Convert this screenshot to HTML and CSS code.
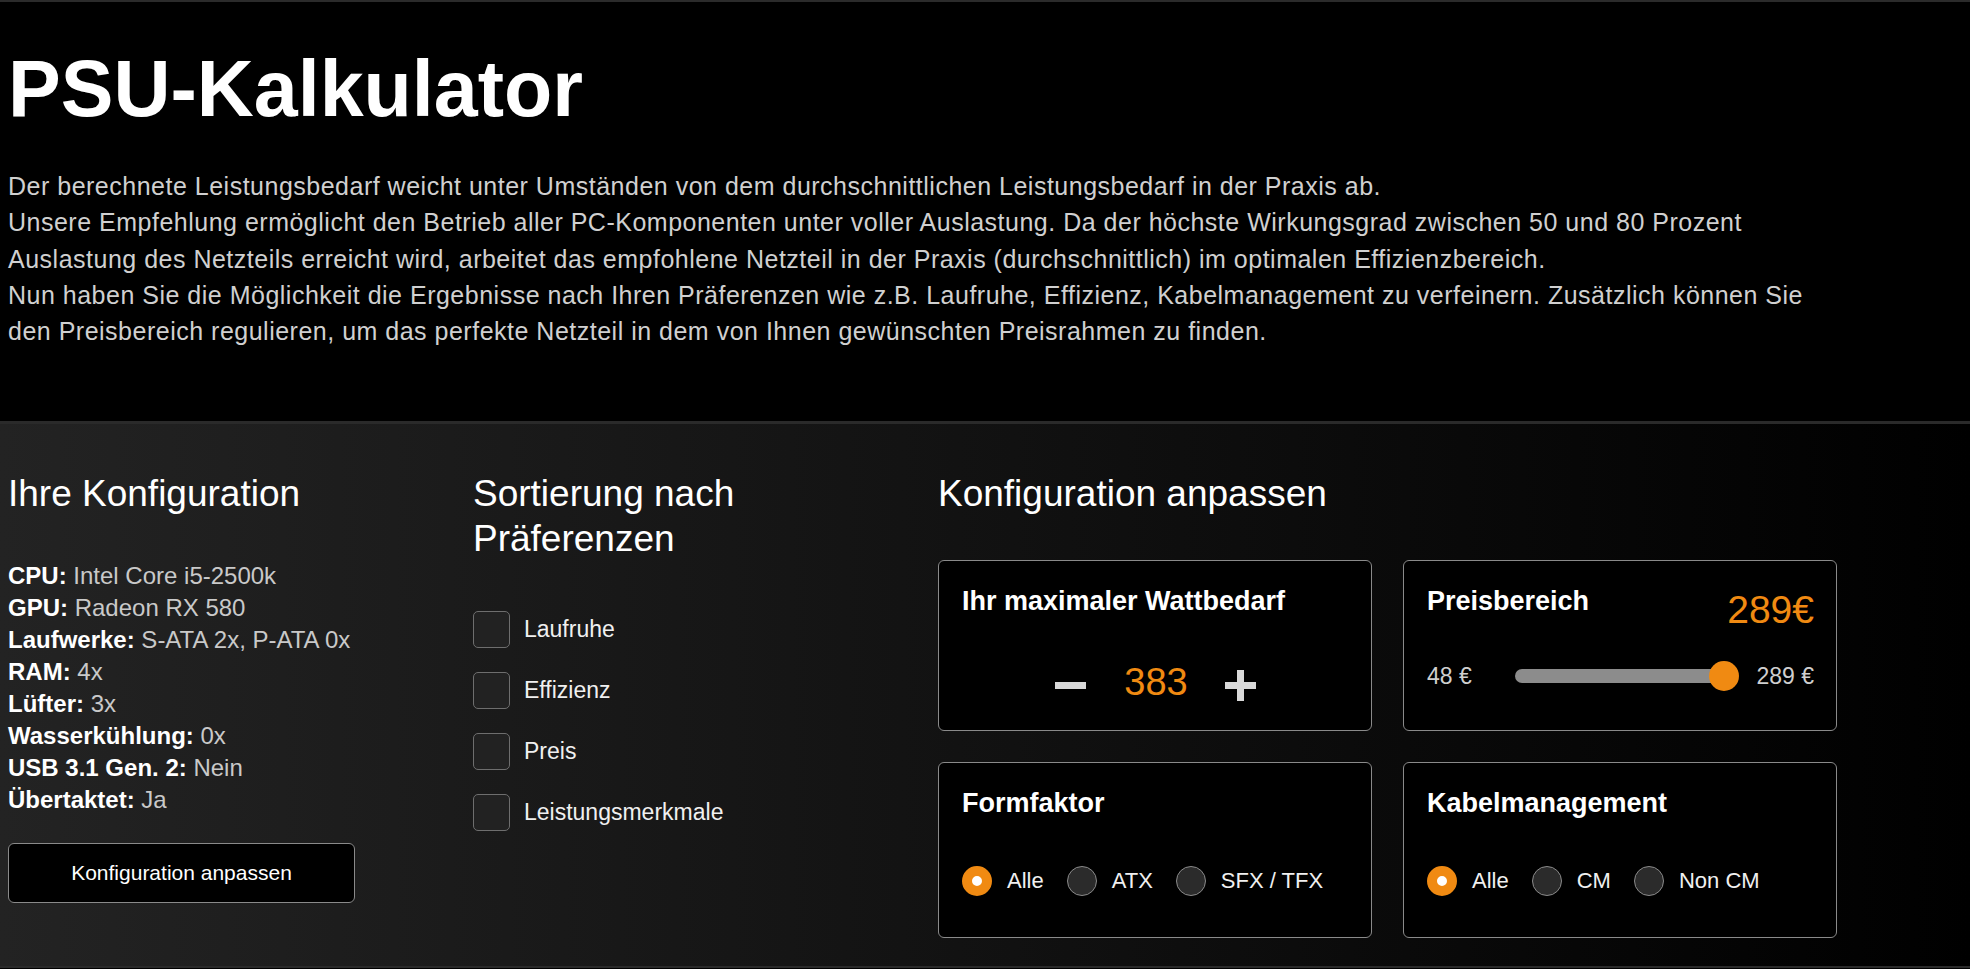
FILE: index.html
```html
<!DOCTYPE html>
<html lang="de">
<head>
<meta charset="utf-8">
<title>PSU-Kalkulator</title>
<link rel="stylesheet" href="styles.css">
</head>
<body>
<div class="topbar"></div>
<header class="intro">
  <h1 class="title">PSU-Kalkulator</h1>
  <p class="lead">Der berechnete Leistungsbedarf weicht unter Umständen von dem durchschnittlichen Leistungsbedarf in der Praxis ab.<br>Unsere Empfehlung ermöglicht den Betrieb aller PC-Komponenten unter voller Auslastung. Da der höchste Wirkungsgrad zwischen 50 und 80 Prozent<br>Auslastung des Netzteils erreicht wird, arbeitet das empfohlene Netzteil in der Praxis (durchschnittlich) im optimalen Effizienzbereich.<br>Nun haben Sie die Möglichkeit die Ergebnisse nach Ihren Präferenzen wie z.B. Laufruhe, Effizienz, Kabelmanagement zu verfeinern. Zusätzlich können Sie<br>den Preisbereich regulieren, um das perfekte Netzteil in dem von Ihnen gewünschten Preisrahmen zu finden.</p>
</header>

<main class="main">
  <section class="col">
    <h2 class="heading heading-spec">Ihre Konfiguration</h2>
    <ul class="spec-list">
      <li><b>CPU:</b> Intel Core i5-2500k</li>
      <li><b>GPU:</b> Radeon RX 580</li>
      <li><b>Laufwerke:</b> S-ATA 2x, P-ATA 0x</li>
      <li><b>RAM:</b> 4x</li>
      <li><b>Lüfter:</b> 3x</li>
      <li><b>Wasserkühlung:</b> 0x</li>
      <li><b>USB 3.1 Gen. 2:</b> Nein</li>
      <li><b>Übertaktet:</b> Ja</li>
    </ul>
    <button class="btn" type="button">Konfiguration anpassen</button>
  </section>

  <section class="col">
    <h2 class="heading">Sortierung nach<br>Präferenzen</h2>
    <ul class="check-list">
      <li class="check-row"><span class="checkbox"></span><span class="check-label">Laufruhe</span></li>
      <li class="check-row"><span class="checkbox"></span><span class="check-label">Effizienz</span></li>
      <li class="check-row"><span class="checkbox"></span><span class="check-label">Preis</span></li>
      <li class="check-row"><span class="checkbox"></span><span class="check-label">Leistungsmerkmale</span></li>
    </ul>
  </section>

  <section class="col col-wide">
    <h2 class="heading heading-cards">Konfiguration anpassen</h2>
    <div class="cards">
      <div class="card card-watt">
        <h3 class="card-title">Ihr maximaler Wattbedarf</h3>
        <div class="stepper">
          <svg class="step-icon minus" width="31" height="7" viewBox="0 0 31 7"><rect x="0" y="0" width="31" height="7" fill="#d9d9d9"/></svg>
          <span class="watt">383</span>
          <svg class="step-icon plus" width="31" height="31" viewBox="0 0 31 31"><rect x="0" y="12" width="31" height="7" fill="#d9d9d9"/><rect x="12" y="0" width="7" height="31" fill="#d9d9d9"/></svg>
        </div>
      </div>

      <div class="card">
        <div class="card-head">
          <h3 class="card-title">Preisbereich</h3>
          <span class="price">289€</span>
        </div>
        <div class="slider-row">
          <span class="slider-label">48 €</span>
          <div class="track"><span class="thumb"></span></div>
          <span class="slider-label">289 €</span>
        </div>
      </div>

      <div class="card card-radio">
        <h3 class="card-title">Formfaktor</h3>
        <div class="radios">
          <span class="radio checked"></span><span class="radio-label">Alle</span>
          <span class="radio"></span><span class="radio-label">ATX</span>
          <span class="radio"></span><span class="radio-label">SFX / TFX</span>
        </div>
      </div>

      <div class="card card-radio">
        <h3 class="card-title">Kabelmanagement</h3>
        <div class="radios">
          <span class="radio checked"></span><span class="radio-label">Alle</span>
          <span class="radio"></span><span class="radio-label">CM</span>
          <span class="radio"></span><span class="radio-label">Non CM</span>
        </div>
      </div>
    </div>
  </section>
</main>
</body>
</html>
```

FILE: styles.css
```css
* {
  box-sizing: border-box;
}

html, body {
  margin: 0;
  padding: 0;
  background: #000;
  color: #fff;
  font-family: "Liberation Sans", Arial, sans-serif;
}

.topbar {
  height: 2px;
  background: #2b2b2b;
}

.intro {
  padding: 0 8px 72px 8px;
}

.title {
  margin: 41px 0 34px 0;
  font-size: 79px;
  line-height: 91px;
  font-weight: 700;
  color: #fff;
}

.lead {
  margin: 0;
  font-size: 25px;
  line-height: 36.3px;
  letter-spacing: 0.5px;
  color: #d0d0d0;
  white-space: nowrap;
}

.main {
  display: grid;
  grid-template-columns: repeat(4, 434px);
  column-gap: 31px;
  align-items: start;
  min-height: 547px;
  padding: 47px 8px 20px 8px;
  border-top: 3px solid #2a2a2a;
  border-bottom: 2px solid #2a2a2a;
  background: linear-gradient(to right, #232323 0%, #000 100%);
}

.col-wide {
  grid-column: span 2;
}

.heading {
  margin: 0 0 43px 0;
  font-size: 37px;
  line-height: 45px;
  font-weight: 400;
  color: #fff;
}

.heading-spec {
  margin-bottom: 44px;
}

.heading-cards {
  margin-bottom: 44px;
}

.spec-list {
  list-style: none;
  margin: 0;
  padding: 0;
  font-size: 24px;
  line-height: 31.9px;
  color: #c9c9c9;
}

.spec-list b {
  color: #fff;
  font-weight: 700;
}

.btn {
  display: block;
  margin-top: 27px;
  width: 347px;
  height: 60px;
  background: #000;
  border: 1px solid #8a8a8a;
  border-radius: 6px;
  color: #fff;
  font-family: inherit;
  font-size: 21px;
  padding: 0;
}

.check-list {
  list-style: none;
  margin: 50px 0 0 0;
  padding: 0;
  display: flex;
  flex-direction: column;
  gap: 24px;
}

.check-row {
  display: flex;
  align-items: center;
  height: 37px;
}

.checkbox {
  width: 37px;
  height: 37px;
  flex-shrink: 0;
  background: #222;
  border: 1px solid #6e6e6e;
  border-radius: 5px;
}

.check-label {
  margin-left: 14px;
  font-size: 23px;
  color: #f0f0f0;
}

.cards {
  display: grid;
  grid-template-columns: 434px 434px;
  gap: 31px;
}

.card {
  background: #000;
  border: 1px solid #8a8a8a;
  border-radius: 6px;
  padding: 24px 22px 25px 23px;
}

.card-watt {
  padding-bottom: 26px;
}

.card-title {
  margin: 0;
  font-size: 27px;
  line-height: 32px;
  font-weight: 700;
  color: #fff;
}

.stepper {
  margin-top: 43px;
  height: 44px;
  display: flex;
  align-items: center;
  justify-content: center;
}

.step-icon {
  display: block;
  margin-top: 6px;
}

.watt {
  margin: 0 37px 0 38px;
  font-size: 38px;
  line-height: 44px;
  color: #f08a12;
}

.card-head {
  display: flex;
  justify-content: space-between;
  align-items: flex-start;
}

.price {
  margin-top: 3px;
  font-size: 39px;
  line-height: 44px;
  color: #f08a12;
}

.slider-row {
  margin-top: 29px;
  height: 30px;
  display: flex;
  align-items: center;
}

.slider-label {
  font-size: 23px;
  color: #cfcfcf;
}

.track {
  flex: 1;
  margin: 0 18px 0 43px;
  height: 14px;
  border-radius: 7px;
  background: #8c8c8c;
  display: flex;
  align-items: center;
  justify-content: flex-end;
}

.thumb {
  width: 30px;
  height: 30px;
  flex-shrink: 0;
  border-radius: 50%;
  background: #f08a12;
  margin-right: -1px;
}

.card-radio {
  padding-bottom: 41px;
}

.radios {
  margin-top: 47px;
  height: 30px;
  display: flex;
  align-items: center;
}

.radio {
  width: 30px;
  height: 30px;
  flex-shrink: 0;
  border-radius: 50%;
  background: #2b2b2b;
  border: 1px solid #8a8a8a;
  margin-left: 23px;
}

.radio:first-child {
  margin-left: 0;
}

.radio.checked {
  border: 10px solid #f08a12;
  background-color: #fff;
}

.radio-label {
  margin-left: 15px;
  font-size: 22px;
  color: #f0f0f0;
}
```
